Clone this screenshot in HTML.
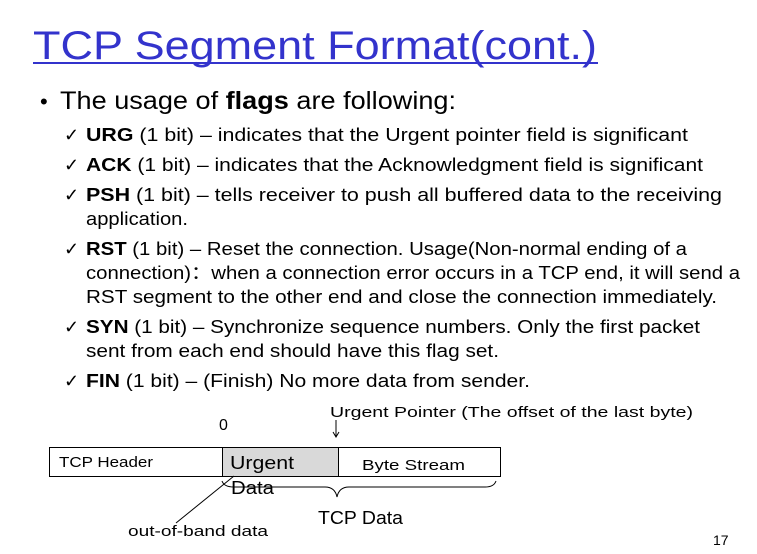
<!DOCTYPE html>
<html><head><meta charset="utf-8"><style>
html,body{margin:0;padding:0;background:#fff;width:757px;height:554px;overflow:hidden}
svg{display:block}
text{font-family:"Liberation Sans",sans-serif;fill:#000}
</style></head><body>
<svg width="757" height="554" viewBox="0 0 757 554" xmlns="http://www.w3.org/2000/svg">
<text x="33" y="59" font-size="40" textLength="564" lengthAdjust="spacingAndGlyphs" style="fill:#3333cc">TCP Segment Format(cont.)</text>
<rect x="33" y="62" width="565" height="2" fill="#3333cc"/>
<text x="40" y="109" font-size="22">•</text>
<text x="60" y="109" font-size="25" textLength="396" lengthAdjust="spacingAndGlyphs">The usage of <tspan font-weight="bold">flags</tspan> are following:</text>
<g font-size="18">
<text x="64" y="141">✓</text>
<text x="86" y="141" textLength="602" lengthAdjust="spacingAndGlyphs"><tspan font-weight="bold">URG</tspan> (1 bit) – indicates that the Urgent pointer field is significant</text>
<text x="64" y="171">✓</text>
<text x="86" y="171" textLength="617" lengthAdjust="spacingAndGlyphs"><tspan font-weight="bold">ACK</tspan> (1 bit) – indicates that the Acknowledgment field is significant</text>
<text x="64" y="201">✓</text>
<text x="86" y="201" textLength="636" lengthAdjust="spacingAndGlyphs"><tspan font-weight="bold">PSH</tspan> (1 bit) – tells  receiver to push all buffered data to the receiving</text>
<text x="86" y="225" textLength="102" lengthAdjust="spacingAndGlyphs">application.</text>
<text x="64" y="255">✓</text>
<text x="86" y="255" textLength="601" lengthAdjust="spacingAndGlyphs"><tspan font-weight="bold">RST</tspan> (1 bit) – Reset the connection. Usage(Non-normal ending of a</text>
<text x="86" y="279" textLength="654" lengthAdjust="spacingAndGlyphs">connection)：when a connection error occurs in a TCP end, it will send a</text>
<text x="86" y="303" textLength="631" lengthAdjust="spacingAndGlyphs">RST segment to the other end and close the connection immediately.</text>
<text x="64" y="333">✓</text>
<text x="86" y="333" textLength="614" lengthAdjust="spacingAndGlyphs"><tspan font-weight="bold">SYN</tspan> (1 bit) – Synchronize sequence numbers. Only the first packet</text>
<text x="86" y="357" textLength="413" lengthAdjust="spacingAndGlyphs">sent from each end should have this flag set.</text>
<text x="64" y="387">✓</text>
<text x="86" y="387" textLength="444" lengthAdjust="spacingAndGlyphs"><tspan font-weight="bold">FIN</tspan> (1 bit) – (Finish) No more data from sender.</text>
</g>
<text x="330" y="417" font-size="15" textLength="363" lengthAdjust="spacingAndGlyphs">Urgent Pointer (The offset of the last byte)</text>
<text x="219" y="430" font-size="16">0</text>
<line x1="336" y1="420" x2="336" y2="436" stroke="#000" stroke-width="1"/>
<path d="M333 432 L336 437 L339 432" fill="none" stroke="#000" stroke-width="1"/>
<rect x="49.5" y="447.5" width="451" height="29" fill="#fff" stroke="#000"/>
<rect x="222.5" y="447.5" width="116" height="29" fill="#d9d9d9" stroke="#000"/>
<text x="59" y="467" font-size="15" textLength="94" lengthAdjust="spacingAndGlyphs">TCP Header</text>
<text x="230" y="469" font-size="18" textLength="64" lengthAdjust="spacingAndGlyphs">Urgent</text>
<text x="362" y="470" font-size="15" textLength="103" lengthAdjust="spacingAndGlyphs">Byte Stream</text>
<text x="231" y="494" font-size="18" textLength="43" lengthAdjust="spacingAndGlyphs">Data</text>
<path d="M222 481 Q224 487 234 487 L325 487 Q335 487 337 497 Q339 487 349 487 L485 487 Q494 487 496 481" fill="none" stroke="#000" stroke-width="1"/>
<line x1="234" y1="476" x2="176" y2="523" stroke="#000" stroke-width="1"/>
<text x="318" y="524" font-size="18" textLength="85" lengthAdjust="spacingAndGlyphs">TCP Data</text>
<text x="128" y="536" font-size="15" textLength="140" lengthAdjust="spacingAndGlyphs">out-of-band data</text>
<text x="713" y="545" font-size="14">17</text>
</svg>
</body></html>
